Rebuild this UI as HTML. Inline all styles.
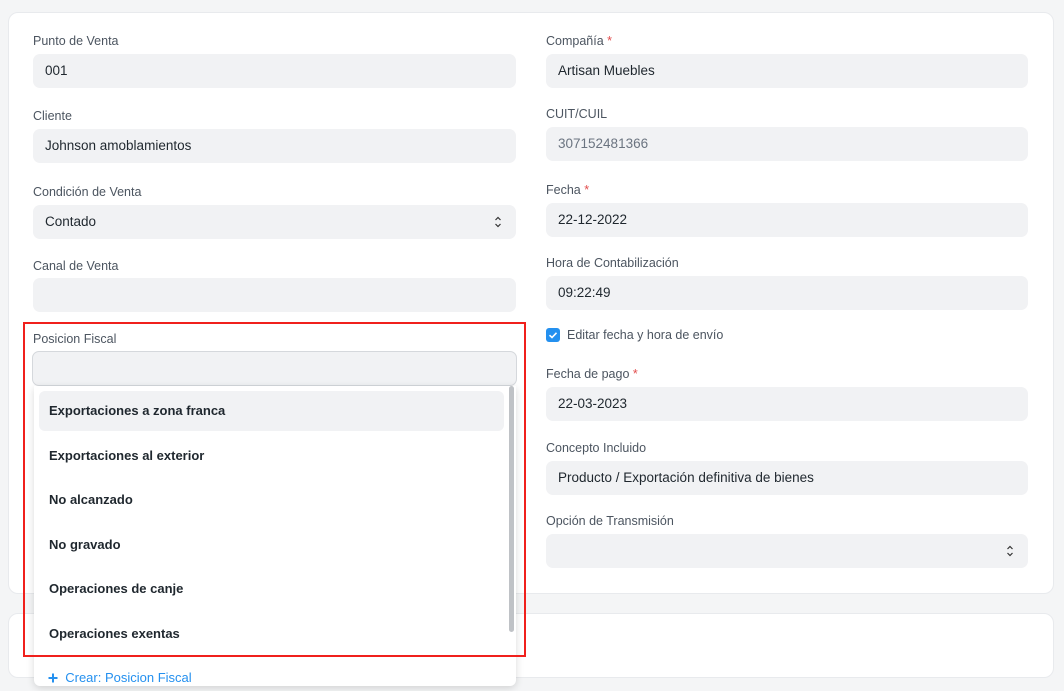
<!DOCTYPE html>
<html><head><meta charset="utf-8"><style>
*{box-sizing:border-box;margin:0;padding:0}
body{width:1064px;height:691px;background:#f4f5f6;font-family:"Liberation Sans",sans-serif;position:relative;overflow:hidden;color:#1f272e}
.card{position:absolute;background:#fff;border:1px solid #e8eaed;border-radius:10px}
.lbl{position:absolute;font-size:12.5px;color:#4c5560}
.req{color:#e24c4c}
.inp{position:absolute;background:#f1f2f4;border-radius:7px;height:34px;font-size:13.5px;padding-left:12px;line-height:34px;color:#1f272e}
.arr{position:absolute;right:14px;top:9px;width:8px;height:16px}
.dd{position:absolute;left:34px;top:386px;width:482px;height:300px;background:#fff;box-shadow:0 2px 8px rgba(0,0,0,.15);border-radius:0 0 6px 6px;overflow:hidden}
.it{position:absolute;left:15px;font-size:13px;font-weight:bold;color:#1f272e}
</style></head><body>
<div class="card" style="left:8px;top:12px;width:1046px;height:582px"></div>
<div class="card" style="left:8px;top:613px;width:1046px;height:65px"></div>

<div class="lbl" style="left:33px;top:34px">Punto de Venta</div>
<div class="inp" style="left:33px;top:54px;width:483px">001</div>
<div class="lbl" style="left:33px;top:109px">Cliente</div>
<div class="inp" style="left:33px;top:129px;width:483px">Johnson amoblamientos</div>
<div class="lbl" style="left:33px;top:185px">Condición de Venta</div>
<div class="inp" style="left:33px;top:205px;width:483px">Contado<svg class="arr" viewBox="0 0 8 16"><path d="M1.5 6 4 3.5 6.5 6M1.5 10 4 12.5 6.5 10" fill="none" stroke="#333" stroke-width="1.2"/></svg></div>
<div class="lbl" style="left:33px;top:259px">Canal de Venta</div>
<div class="inp" style="left:33px;top:278px;width:483px"></div>
<div class="lbl" style="left:33px;top:332px">Posicion Fiscal</div>
<div class="inp" style="left:32px;top:351px;width:485px;height:35px;border:1.5px solid #d5d8dc"></div>

<div class="dd">
<div style="position:absolute;left:5px;top:5px;width:465px;height:40px;background:#f1f2f4;border-radius:6px"></div>
<div style="position:absolute;left:475px;top:0;width:5px;height:246px;background:#bfc2c6;border-radius:3px"></div>
<div class="it" style="top:17px">Exportaciones a zona franca</div>
<div class="it" style="top:62px">Exportaciones al exterior</div>
<div class="it" style="top:106px">No alcanzado</div>
<div class="it" style="top:151px">No gravado</div>
<div class="it" style="top:195px">Operaciones de canje</div>
<div class="it" style="top:240px">Operaciones exentas</div>
<div style="position:absolute;left:14px;top:284px;font-size:13px;color:#2490ef"><svg width="10" height="10" viewBox="0 0 10 10" style="vertical-align:-1px"><path d="M5 0.5V9.5M0.5 5H9.5" stroke="#2490ef" stroke-width="2"/></svg>&nbsp;&nbsp;Crear: Posicion Fiscal</div>
</div>
<div style="position:absolute;left:23px;top:322px;width:503px;height:335px;border:2px solid #f0201c"></div>

<div class="lbl" style="left:546px;top:34px">Compañía <span class="req">*</span></div>
<div class="inp" style="left:546px;top:54px;width:482px">Artisan Muebles</div>
<div class="lbl" style="left:546px;top:107px">CUIT/CUIL</div>
<div class="inp" style="left:546px;top:127px;width:482px;color:#6b7480">307152481366</div>
<div class="lbl" style="left:546px;top:183px">Fecha <span class="req">*</span></div>
<div class="inp" style="left:546px;top:203px;width:482px">22-12-2022</div>
<div class="lbl" style="left:546px;top:256px">Hora de Contabilización</div>
<div class="inp" style="left:546px;top:276px;width:482px">09:22:49</div>
<div style="position:absolute;left:546px;top:328px;width:14px;height:14px;background:#2490ef;border-radius:3px"><svg viewBox="0 0 14 14" width="14" height="14"><path d="M3.5 7.2 6 9.5 10.5 4.8" fill="none" stroke="#fff" stroke-width="1.6"/></svg></div>
<div class="lbl" style="left:567px;top:328px">Editar fecha y hora de envío</div>
<div class="lbl" style="left:546px;top:367px">Fecha de pago <span class="req">*</span></div>
<div class="inp" style="left:546px;top:387px;width:482px">22-03-2023</div>
<div class="lbl" style="left:546px;top:441px">Concepto Incluido</div>
<div class="inp" style="left:546px;top:461px;width:482px">Producto / Exportación definitiva de bienes</div>
<div class="lbl" style="left:546px;top:514px">Opción de Transmisión</div>
<div class="inp" style="left:546px;top:534px;width:482px"><svg class="arr" viewBox="0 0 8 16"><path d="M1.5 6 4 3.5 6.5 6M1.5 10 4 12.5 6.5 10" fill="none" stroke="#333" stroke-width="1.2"/></svg></div>
</body></html>
